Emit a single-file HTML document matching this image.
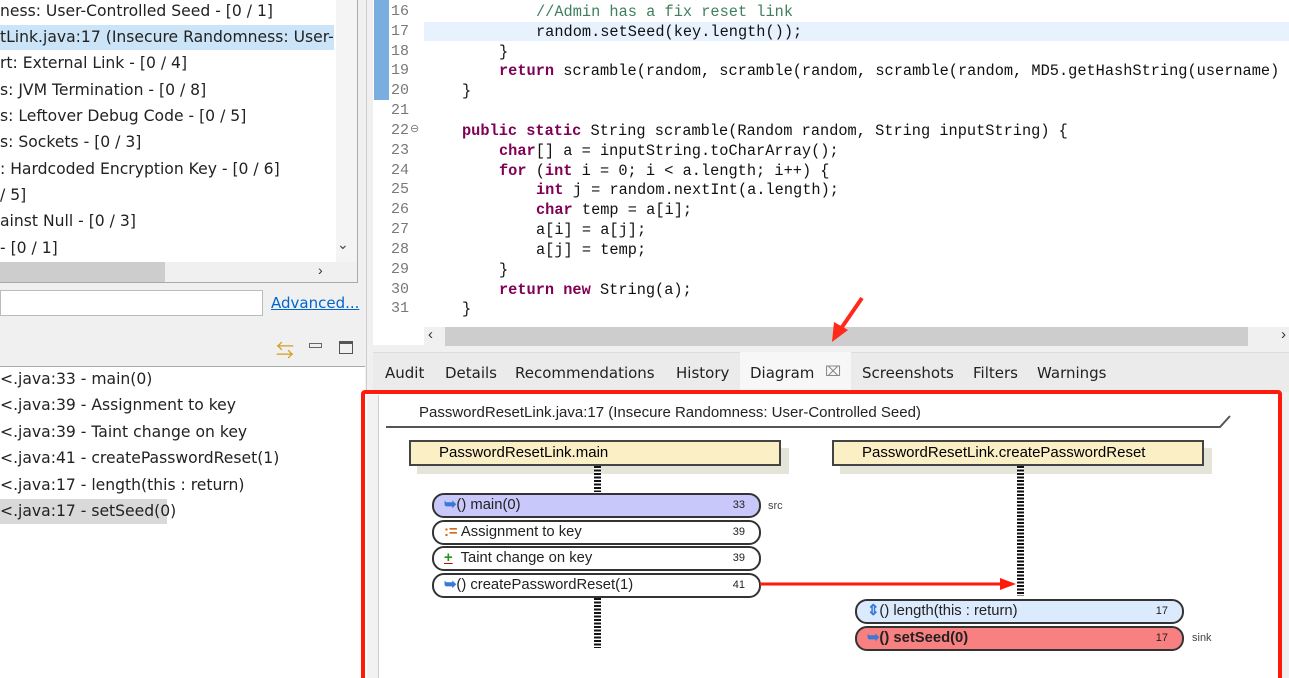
<!DOCTYPE html>
<html style="width:1289px;height:678px;overflow:hidden"><head><meta charset="utf-8"><style>
*{margin:0;padding:0;box-sizing:border-box}
body{width:1289px;height:678px;overflow:hidden;background:#f0f0f0;position:relative;font-family:"Liberation Sans","Noto Sans CJK SC",sans-serif;}
.a{position:absolute;white-space:nowrap}
.tree{color:#222;font-family:"DejaVu Sans","Liberation Sans",sans-serif;font-size:15.6px}
.code{font-family:"Liberation Mono",monospace;font-size:15.3px;color:#111}
.k{color:#7f0055;font-weight:bold}
.c{color:#3f7f5f}
.ln{font-family:"Liberation Mono",monospace;font-size:15px;color:#787878}
.tab{font-family:"DejaVu Sans","Liberation Sans",sans-serif;font-size:15px;color:#222;top:364px}
.pill{position:absolute;border:2px solid #333;border-radius:12px;height:25px;font-size:14.8px;font-family:"Liberation Sans",sans-serif;color:#222;padding-left:10px;line-height:21px}
.pill .n{position:absolute;right:14px;font-size:11px;top:0}
.hdr{position:absolute;background:#fbefc6;border:2px solid #444;height:26px;font-size:15px;line-height:22px;box-shadow:8px 8px 0 #e4e4d8}
.ic{color:#3a78d8;font-weight:bold}
</style></head><body>
<div class="a" style="left:0;top:0;width:358px;height:283px;background:#fff;border-right:1px solid #aaa;border-bottom:1px solid #aaa"></div>
<div class="a" style="left:0;top:25px;width:334px;height:25px;background:#cce4f7"></div>
<div class="a" style="left:336px;top:0;width:21px;height:262px;background:#f4f4f4"></div>
<div class="a" style="left:337px;top:236px;font-size:14px;color:#444">&#8964;</div>
<div class="a" style="left:0;top:262px;width:357px;height:20px;background:#f0f0f0"></div>
<div class="a" style="left:0;top:262px;width:165px;height:20px;background:#cdcdcd"></div>
<div class="a" style="left:318px;top:262px;font-size:14px;color:#333">&#8250;</div>
<div class="tree">
<div class="a" style="left:0;top:2px">ness: User-Controlled Seed - [0 / 1]</div>
<div class="a" style="left:0;top:28px;width:334px;overflow:hidden">tLink.java:17 (Insecure Randomness: User-C</div>
<div class="a" style="left:0;top:54px">rt: External Link - [0 / 4]</div>
<div class="a" style="left:0;top:81px">s: JVM Termination - [0 / 8]</div>
<div class="a" style="left:0;top:107px">s: Leftover Debug Code - [0 / 5]</div>
<div class="a" style="left:0;top:133px">s: Sockets - [0 / 3]</div>
<div class="a" style="left:0;top:160px">: Hardcoded Encryption Key - [0 / 6]</div>
<div class="a" style="left:0;top:186px">/ 5]</div>
<div class="a" style="left:0;top:212px">ainst Null - [0 / 3]</div>
<div class="a" style="left:0;top:239px">- [0 / 1]</div>
</div>
<div class="a" style="left:0;top:290px;width:263px;height:26px;background:#fff;border:1px solid #bbb"></div>
<div class="a" style="left:271px;top:294px;font-size:15px;color:#0066cc;text-decoration:underline;font-family:'DejaVu Sans',sans-serif">Advanced...</div>
<div class="a" style="left:366px;top:0;width:1px;height:678px;background:#ccc"></div>
<div class="a" style="left:276px;top:337px;font-size:18px;color:#d4a020">&#8646;</div>
<div class="a" style="left:309px;top:343px;width:13px;height:5px;border:1px solid #666"></div>
<div class="a" style="left:339px;top:341px;width:14px;height:13px;border:1px solid #555;border-top:3px solid #555"></div>
<div class="a" style="left:0;top:366px;width:365px;height:312px;background:#fff;border-top:1px solid #aaa"></div>
<div class="a" style="left:0;top:499px;width:167px;height:25px;background:#d9d9d9"></div>
<div class="tree">
<div class="a" style="left:0;top:370px">&lt;.java:33 - main(0)</div>
<div class="a" style="left:0;top:396px">&lt;.java:39 - Assignment to key</div>
<div class="a" style="left:0;top:423px">&lt;.java:39 - Taint change on key</div>
<div class="a" style="left:0;top:449px">&lt;.java:41 - createPasswordReset(1)</div>
<div class="a" style="left:0;top:476px">&lt;.java:17 - length(this : return)</div>
<div class="a" style="left:0;top:502px">&lt;.java:17 - setSeed(0)</div>
</div>
<div class="a" style="left:373px;top:0;width:916px;height:345px;background:#fff"></div>
<div class="a" style="left:374px;top:0;width:15px;height:100px;background:#7aaee0"></div>
<div class="a" style="left:424px;top:22px;width:865px;height:19px;background:#e8f2fe"></div>
<div class="ln">
<div class="a" style="left:391px;top:3px">16</div><div class="a" style="left:391px;top:23px">17</div><div class="a" style="left:391px;top:43px">18</div><div class="a" style="left:391px;top:62px">19</div><div class="a" style="left:391px;top:82px">20</div><div class="a" style="left:391px;top:102px">21</div><div class="a" style="left:391px;top:122px">22</div><div class="a" style="left:391px;top:142px">23</div><div class="a" style="left:391px;top:162px">24</div><div class="a" style="left:391px;top:181px">25</div><div class="a" style="left:391px;top:201px">26</div><div class="a" style="left:391px;top:221px">27</div><div class="a" style="left:391px;top:241px">28</div><div class="a" style="left:391px;top:261px">29</div><div class="a" style="left:391px;top:281px">30</div><div class="a" style="left:391px;top:300px">31</div>
<div class="a" style="left:410px;top:122px;font-size:11px">&#8854;</div>
</div>
<div class="code">
<div class="a c" style="left:536px;top:3px">//Admin has a fix reset link</div>
<div class="a" style="left:536px;top:23px">random.setSeed(key.length());</div>
<div class="a" style="left:499px;top:43px">}</div>
<div class="a" style="left:499px;top:62px"><span class="k">return</span> scramble(random, scramble(random, scramble(random, MD5.getHashString(username)</div>
<div class="a" style="left:462px;top:82px">}</div>
<div class="a" style="left:462px;top:122px"><span class="k">public static</span> String scramble(Random random, String inputString) {</div>
<div class="a" style="left:499px;top:142px"><span class="k">char</span>[] a = inputString.toCharArray();</div>
<div class="a" style="left:499px;top:162px"><span class="k">for</span> (<span class="k">int</span> i = 0; i &lt; a.length; i++) {</div>
<div class="a" style="left:536px;top:181px"><span class="k">int</span> j = random.nextInt(a.length);</div>
<div class="a" style="left:536px;top:201px"><span class="k">char</span> temp = a[i];</div>
<div class="a" style="left:536px;top:221px">a[i] = a[j];</div>
<div class="a" style="left:536px;top:241px">a[j] = temp;</div>
<div class="a" style="left:499px;top:261px">}</div>
<div class="a" style="left:499px;top:281px"><span class="k">return new</span> String(a);</div>
<div class="a" style="left:462px;top:300px">}</div>
</div>
<div class="a" style="left:424px;top:327px;width:865px;height:19px;background:#f0f0f0"></div>
<div class="a" style="left:445px;top:327px;width:803px;height:19px;background:#cdcdcd"></div>
<div class="a" style="left:428px;top:326px;font-size:15px;color:#333">&#8249;</div>
<div class="a" style="left:1281px;top:326px;font-size:15px;color:#333">&#8250;</div>
<svg class="a" style="left:820px;top:290px" width="60" height="60"><line x1="42" y1="8" x2="20" y2="40" stroke="#ff2a1a" stroke-width="4"/><polygon points="12,52 14,32 28,40" fill="#ff2a1a"/></svg>
<div class="a" style="left:373px;top:352px;width:916px;height:40px;background:#ebebeb;border-top:1px solid #ddd"></div>
<div class="a" style="left:740px;top:352px;width:111px;height:40px;background:#f7f7f7"></div>
<div class="a tab" style="left:385px">Audit</div>
<div class="a tab" style="left:445px">Details</div>
<div class="a tab" style="left:515px">Recommendations</div>
<div class="a tab" style="left:676px">History</div>
<div class="a tab" style="left:750px">Diagram</div>
<div class="a tab" style="left:825px;color:#888;font-size:14px">&#8999;</div>
<div class="a tab" style="left:862px">Screenshots</div>
<div class="a tab" style="left:973px">Filters</div>
<div class="a tab" style="left:1037px">Warnings</div>
<div class="a" style="left:361px;top:390px;width:921px;height:300px;background:#fff;border:4px solid #ff1a0a;border-radius:4px"></div>
<div class="a" style="left:367px;top:395px;width:12px;height:290px;background:#f2f2f2;border-right:1px solid #ccc"></div>
<div class="a" style="left:419px;top:404px;font-size:15px;color:#222">PasswordResetLink.java:17 (Insecure Randomness: User-Controlled Seed)</div>
<svg class="a" style="left:380px;top:410px" width="860" height="22"><polyline points="6,17 840,17 850,6" fill="none" stroke="#555" stroke-width="2"/></svg>
<div class="hdr" style="left:409px;top:440px;width:372px;padding-left:28px">PasswordResetLink.main</div>
<div class="hdr" style="left:832px;top:440px;width:372px;padding-left:28px">PasswordResetLink.createPasswordReset</div>
<div class="a" style="left:594px;top:466px;width:7px;height:26px;background:repeating-linear-gradient(#111 0 2px,#fff 2px 3.5px)"></div>
<div class="a" style="left:594px;top:598px;width:7px;height:50px;background:repeating-linear-gradient(#111 0 2px,#fff 2px 3.5px)"></div>
<div class="a" style="left:1017px;top:466px;width:7px;height:130px;background:repeating-linear-gradient(#111 0 2px,#fff 2px 3.5px)"></div>
<div class="pill" style="left:432px;top:493px;width:329px;background:#c8c8fa"><span class="ic">&#10149;</span>() main(0)<span class="n">33</span></div>
<div class="pill" style="left:432px;top:520px;width:329px;background:#fff"><span style="color:#d06a1a;font-weight:bold">:=</span> Assignment to key<span class="n">39</span></div>
<div class="pill" style="left:432px;top:546px;width:329px;background:#fff"><span style="color:#1a9a1a;font-weight:bold;text-decoration:underline;text-decoration-color:#c00">+</span>&nbsp; Taint change on key<span class="n">39</span></div>
<div class="pill" style="left:432px;top:573px;width:329px;background:#fff"><span class="ic">&#10149;</span>() createPasswordReset(1)<span class="n">41</span></div>
<div class="a" style="left:768px;top:500px;font-size:11px;color:#444">src</div>
<svg class="a" style="left:760px;top:576px" width="262" height="16"><line x1="0" y1="8" x2="244" y2="8" stroke="#ff1a0a" stroke-width="3"/><polygon points="256,8 240,2 240,14" fill="#ff1a0a"/></svg>
<div class="pill" style="left:855px;top:599px;width:329px;background:#dbeafc"><span class="ic">&#8661;</span>() length(this : return)<span class="n">17</span></div>
<div class="pill" style="left:855px;top:626px;width:329px;background:#f88080;font-weight:bold"><span class="ic">&#10149;</span>() setSeed(0)<span class="n" style="font-weight:normal">17</span></div>
<div class="a" style="left:1192px;top:632px;font-size:11px;color:#444">sink</div>
</body></html>
